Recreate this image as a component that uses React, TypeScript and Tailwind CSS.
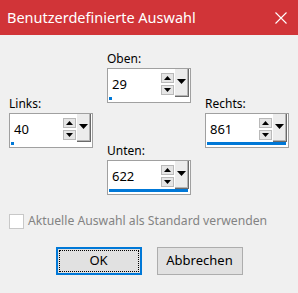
import React from 'react';

interface Field {
  label: string;
  value: string;
  full: boolean;
}

const SpinButton: React.FC<{ up?: boolean }> = ({ up }) => (
  <div className="flex h-[10px] w-[13px] items-center justify-center border border-[#b9b9b9] bg-[#e5e5e5]">
    <svg width="7" height="4" viewBox="0 0 7 4">
      {up ? <path d="M0 4h7L3.5 0z" fill="#000" /> : <path d="M0 0h7L3.5 4z" fill="#000" />}
    </svg>
  </div>
);

const SpinBox: React.FC<Field> = ({ label, value, full }) => (
  <div className="flex w-[84px] flex-col">
    <div className="mb-[1px] h-[16px] text-[12px] leading-[16px] text-black">{label}</div>
    <div className="flex h-[35px] flex-col border border-[#a0a0a0] bg-white">
      <div className="flex h-[28px]">
        <span className="flex-1 self-center pl-[4px] pt-[2px] text-[13px] leading-none text-black">{value}</span>
        <div className="flex w-[13px] flex-col justify-center gap-[2px] pt-[2px]">
          <SpinButton up />
          <SpinButton />
        </div>
        <div className="ml-[1px] mr-[1px] flex w-[14px] justify-center border-r border-b border-[#6a6a6a] bg-[#ececec] pt-[10px] shadow-[inset_-1px_-1px_0_#b4b4b4]">
          <svg width="9" height="5" viewBox="0 0 9 5">
            <path d="M0 0h9L4.5 5z" fill="#000" />
          </svg>
        </div>
      </div>
      <div className="flex h-[3px] pl-[1px] pr-[2px]">
        <div className={full ? 'flex-1 bg-[#0078d7]' : 'w-[3px] bg-[#0078d7]'} />
      </div>
    </div>
  </div>
);

export default function App() {
  return (
    <div className="flex h-[293px] w-[298px] flex-col bg-[#f0f0f0] font-['Segoe_UI','Noto_Sans',sans-serif]">
      <div className="flex h-[35px] items-center justify-between bg-[#d13438] pl-[7px] pr-[11px]">
        <span className="text-[14.5px] leading-none text-white">Benutzerdefinierte Auswahl</span>
        <svg width="12" height="12" viewBox="0 0 12 12">
          <path d="M0.5 0.5L11.5 11.5M11.5 0.5L0.5 11.5" stroke="#fff" strokeWidth="1.1" />
        </svg>
      </div>

      <div className="flex gap-[14px] pl-[9px] pt-[16px]">
        <div className="mt-[45px]">
          <SpinBox label="Links:" value="40" full={false} />
        </div>
        <div className="flex flex-col gap-[40px]">
          <SpinBox label="Oben:" value="29" full={false} />
          <SpinBox label="Unten:" value="622" full />
        </div>
        <div className="mt-[45px]">
          <SpinBox label="Rechts:" value="861" full />
        </div>
      </div>

      <div className="mt-[19px] flex items-center gap-[4px] pl-[9px]">
        <div className="h-[15px] w-[15px] border border-[#c8c8c8] bg-white" />
        <span className="text-[12.2px] leading-none text-[#838383]">Aktuelle Auswahl als Standard verwenden</span>
      </div>

      <div className="mt-[18px] flex justify-center gap-[15px]">
        <button className="flex h-[28px] w-[86px] items-center justify-center border-2 border-[#0078d7] bg-[#e1e1e1] p-[1px]">
          <span className="flex h-full w-full items-center justify-center border border-dotted border-black text-[13px] text-black">OK</span>
        </button>
        <button className="flex h-[28px] w-[86px] items-center justify-center border border-[#adadad] bg-[#e1e1e1] text-[13px] text-black">
          Abbrechen
        </button>
      </div>
    </div>
  );
}
